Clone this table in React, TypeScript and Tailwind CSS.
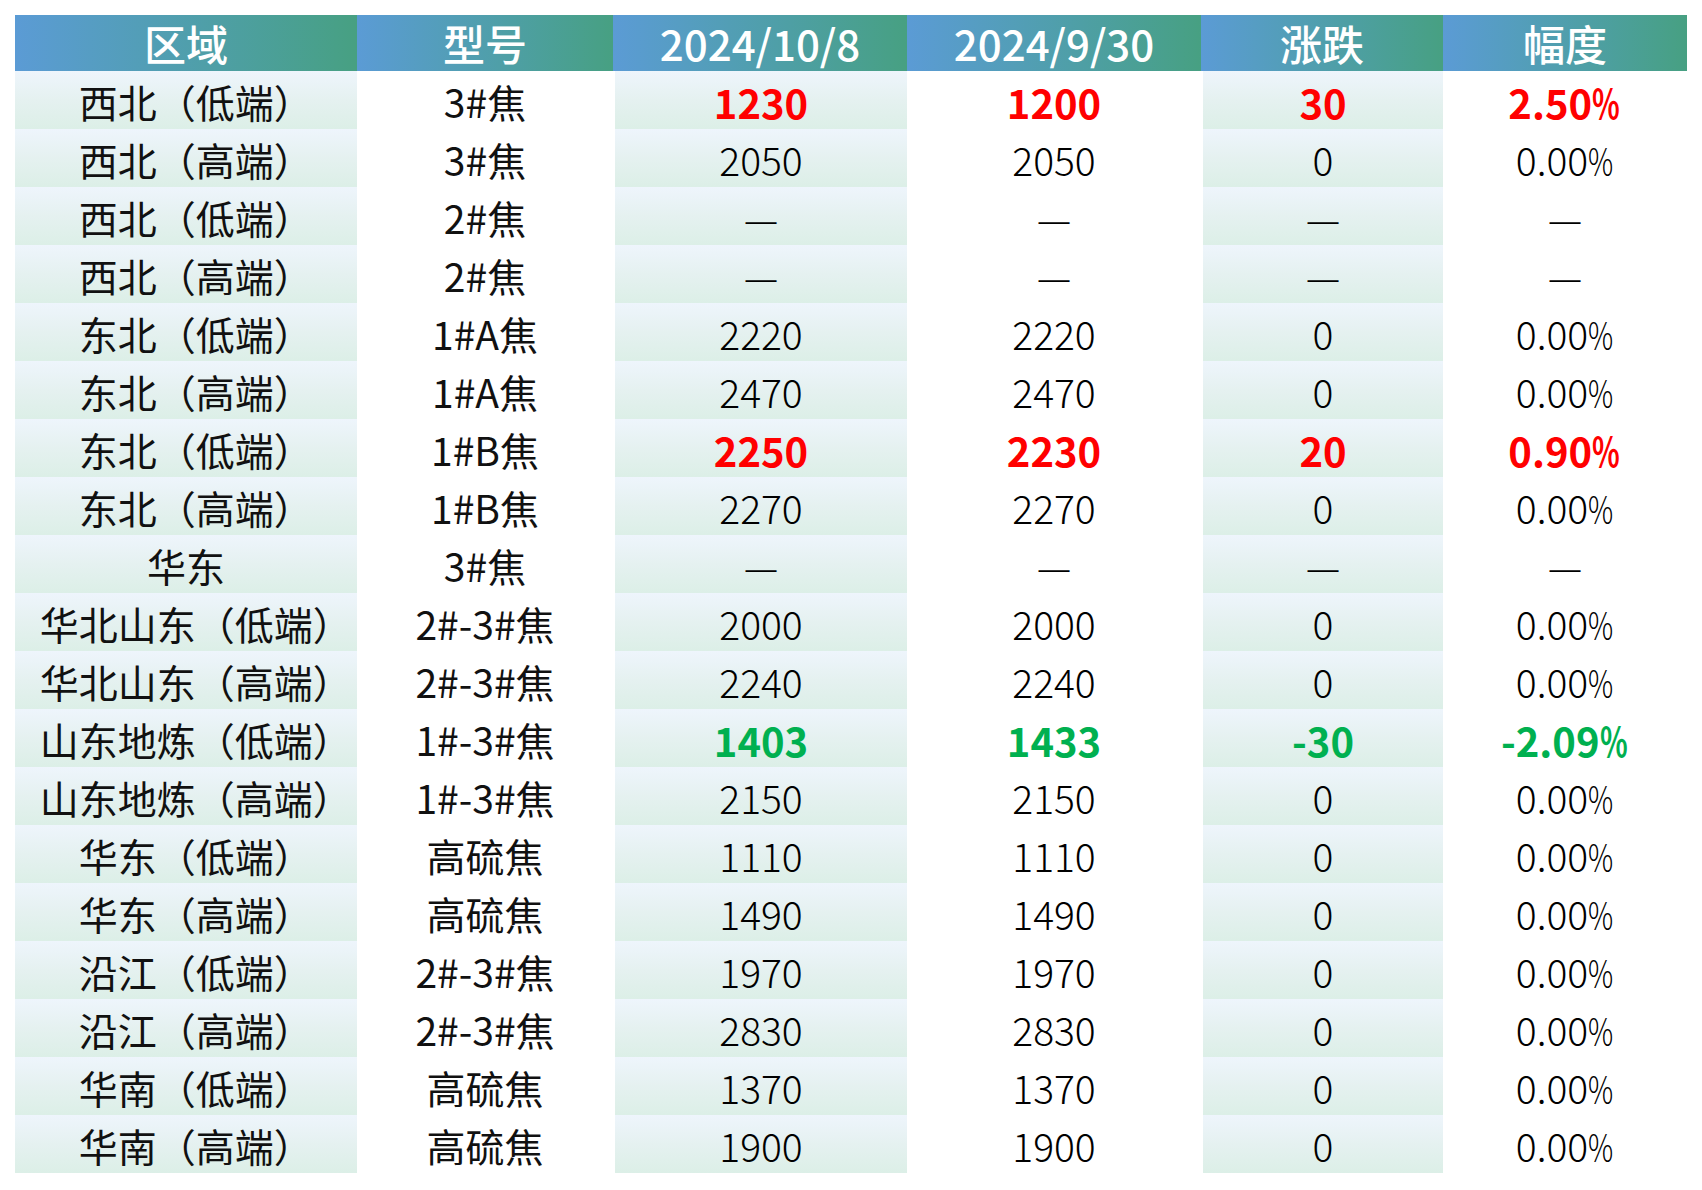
import React from "react";

type Tone = "up" | "down" | "flat";

type Row = {
  area: string;
  model: string;
  now: string;
  prev: string;
  diff: string;
  pct: string;
  tone: Tone;
};

const D = "—";

const rows: Row[] = [
  { area: "西北（低端）", model: "3#焦", now: "1230", prev: "1200", diff: "30", pct: "2.50%", tone: "up" },
  { area: "西北（高端）", model: "3#焦", now: "2050", prev: "2050", diff: "0", pct: "0.00%", tone: "flat" },
  { area: "西北（低端）", model: "2#焦", now: D, prev: D, diff: D, pct: D, tone: "flat" },
  { area: "西北（高端）", model: "2#焦", now: D, prev: D, diff: D, pct: D, tone: "flat" },
  { area: "东北（低端）", model: "1#A焦", now: "2220", prev: "2220", diff: "0", pct: "0.00%", tone: "flat" },
  { area: "东北（高端）", model: "1#A焦", now: "2470", prev: "2470", diff: "0", pct: "0.00%", tone: "flat" },
  { area: "东北（低端）", model: "1#B焦", now: "2250", prev: "2230", diff: "20", pct: "0.90%", tone: "up" },
  { area: "东北（高端）", model: "1#B焦", now: "2270", prev: "2270", diff: "0", pct: "0.00%", tone: "flat" },
  { area: "华东", model: "3#焦", now: D, prev: D, diff: D, pct: D, tone: "flat" },
  { area: "华北山东（低端）", model: "2#-3#焦", now: "2000", prev: "2000", diff: "0", pct: "0.00%", tone: "flat" },
  { area: "华北山东（高端）", model: "2#-3#焦", now: "2240", prev: "2240", diff: "0", pct: "0.00%", tone: "flat" },
  { area: "山东地炼（低端）", model: "1#-3#焦", now: "1403", prev: "1433", diff: "-30", pct: "-2.09%", tone: "down" },
  { area: "山东地炼（高端）", model: "1#-3#焦", now: "2150", prev: "2150", diff: "0", pct: "0.00%", tone: "flat" },
  { area: "华东（低端）", model: "高硫焦", now: "1110", prev: "1110", diff: "0", pct: "0.00%", tone: "flat" },
  { area: "华东（高端）", model: "高硫焦", now: "1490", prev: "1490", diff: "0", pct: "0.00%", tone: "flat" },
  { area: "沿江（低端）", model: "2#-3#焦", now: "1970", prev: "1970", diff: "0", pct: "0.00%", tone: "flat" },
  { area: "沿江（高端）", model: "2#-3#焦", now: "2830", prev: "2830", diff: "0", pct: "0.00%", tone: "flat" },
  { area: "华南（低端）", model: "高硫焦", now: "1370", prev: "1370", diff: "0", pct: "0.00%", tone: "flat" },
  { area: "华南（高端）", model: "高硫焦", now: "1900", prev: "1900", diff: "0", pct: "0.00%", tone: "flat" },
];

const heads = ["区域", "型号", "2024/10/8", "2024/9/30", "涨跌", "幅度"];

const toneClass: Record<Tone, string> = {
  up: "text-[#ff0000] font-bold text-[40px]",
  down: "text-[#00b050] font-bold text-[40px]",
  flat: "text-black font-light",
};

function Cell({
  children,
  shaded,
  inset,
  className,
}: {
  children: React.ReactNode;
  shaded?: boolean;
  inset?: boolean;
  className?: string;
}) {
  return (
    <div
      className={[
        "flex h-[58px] items-center justify-center pt-[3px] whitespace-nowrap",
        shaded ? "bg-linear-to-b from-[#eef5fc] via-[#e5f1f0] to-[#dcefe7]" : "bg-white",
        inset ? "ml-[2px]" : "",
        className ?? "",
      ].join(" ")}
    >
      {children}
    </div>
  );
}

// fullwidth close paren leaves blank space on its right, pull it in so the text sits centred
function Area({ text }: { text: string }) {
  const paren = text.endsWith("）");
  return <span className={paren ? "-mr-[0.5em]" : ""}>{text}</span>;
}

function Pct({ value }: { value: string }) {
  if (!value.endsWith("%")) return <>{value}</>;
  return (
    <span>
      {value.slice(0, -1)}
      <span className="-mr-[9px] inline-block origin-left scale-x-[0.72]">%</span>
    </span>
  );
}

export default function App() {
  return (
    <div
      className="min-h-screen bg-white pl-[15px] pt-[15px]"
      style={{ fontFamily: '"Noto Sans CJK SC", "Noto Sans", sans-serif' }}
    >
      <div className="grid w-[1672px] grid-cols-[342px_256px_294px_294px_242px_244px] text-[39px] leading-none">
        {heads.map((h) => (
          <div
            key={h}
            className="flex h-[56px] items-center justify-center bg-linear-to-r from-[#5b9bd5] to-[#47a082] text-[42px] font-medium text-white"
          >
            {h}
          </div>
        ))}

        {rows.map((r, i) => (
          <React.Fragment key={i}>
            <Cell shaded className="font-normal text-[#111]">
              <Area text={r.area} />
            </Cell>
            <Cell className="font-normal text-[#111]">{r.model}</Cell>
            <Cell shaded inset className={toneClass[r.tone]}>
              {r.now}
            </Cell>
            <Cell className={toneClass[r.tone]}>{r.prev}</Cell>
            <Cell shaded inset className={toneClass[r.tone]}>
              {r.diff}
            </Cell>
            <Cell className={toneClass[r.tone]}>
              <Pct value={r.pct} />
            </Cell>
          </React.Fragment>
        ))}
      </div>
    </div>
  );
}
